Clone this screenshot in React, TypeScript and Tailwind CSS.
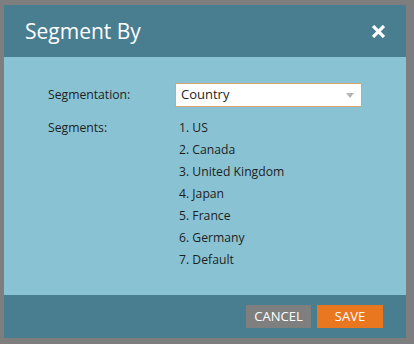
const SEGMENTS = ['US', 'Canada', 'United Kingdom', 'Japan', 'France', 'Germany', 'Default']

export default function App() {
  return (
    <div className="h-[344px] w-[414px] bg-[#7e7e7e] pl-[4px] pt-[5px]" style={{ fontFamily: '"Open Sans", "Liberation Sans", sans-serif' }}>
      <div className="flex h-[333px] w-[402px] flex-col">
        {/* Header */}
        <div className="flex h-[52px] shrink-0 items-center justify-between bg-[#487e90] pl-[21px] pr-[21px]">
          <h1 className="text-[21px] leading-none text-white">Segment By</h1>
          <svg width="13" height="13" viewBox="0 0 12 12" aria-hidden>
            <path d="M2 2L10 10M10 2L2 10" stroke="white" strokeWidth="3" strokeLinecap="square" />
          </svg>
        </div>

        {/* Body */}
        <div className="flex-1 bg-[#89c3d3] pl-[44px] pt-[26px] text-[12.2px] text-[#1e1e1e]">
          <div className="flex items-center">
            <span className="w-[127px]">Segmentation:</span>
            <div className="flex h-[24px] w-[187px] items-center justify-between border border-[#d6a46e] bg-white pl-[5px] pr-[7px] text-[13px]">
              <span>Country</span>
              <svg width="8" height="5" viewBox="0 0 8 5" aria-hidden>
                <path d="M0 0H8L4 5Z" fill="#b5b5b5" />
              </svg>
            </div>
          </div>
          <div className="mt-[10px] flex">
            <span className="w-[131px] leading-[22px]">Segments:</span>
            <ol className="leading-[22px]">
              {SEGMENTS.map((s, i) => (
                <li key={s}>{i + 1}. {s}</li>
              ))}
            </ol>
          </div>
        </div>

        {/* Footer */}
        <div className="flex h-[43px] shrink-0 items-center justify-end gap-[6px] bg-[#487e90] pr-[23px]">
          <button className="h-[23px] w-[65px] bg-[#7f7f7f] text-[13px] text-white">CANCEL</button>
          <button className="h-[23px] w-[66px] bg-[#e8771f] text-[13px] text-white">SAVE</button>
        </div>
      </div>
    </div>
  )
}
